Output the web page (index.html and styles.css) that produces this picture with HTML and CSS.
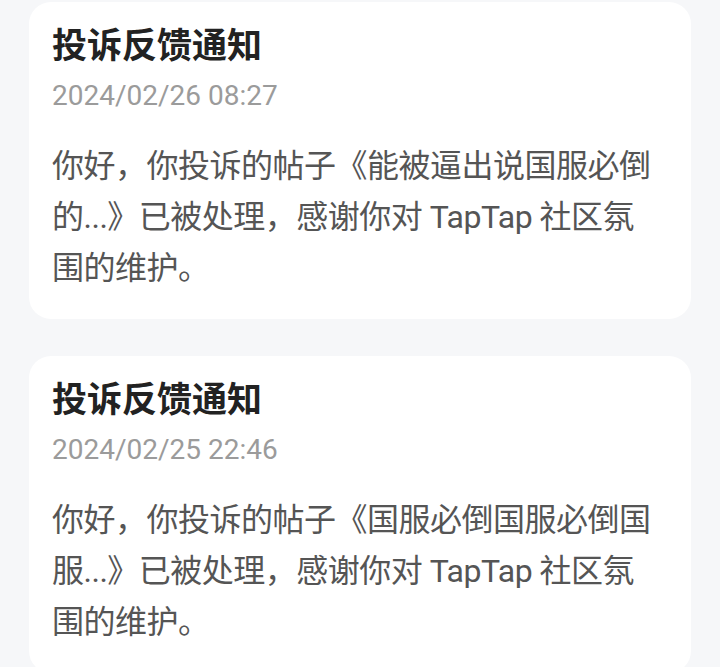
FILE: index.html
```html
<!DOCTYPE html>
<html lang="zh-CN">
<head>
    <meta charset="UTF-8">
    <meta name="viewport" content="width=device-width, initial-scale=1.0">
    <title>通知</title>
    <link rel="stylesheet" href="styles.css">
</head>
<body>
    <div class="list">
        <div class="card">
            <h2 class="title">投诉反馈通知</h2>
            <div class="time">2024/02/26 08:27</div>
            <p class="text">你好，你投诉的帖子《能被逼出说国服必倒的...》已被处理，感谢你对 TapTap 社区氛围的维护。</p>
        </div>
        <div class="card">
            <h2 class="title">投诉反馈通知</h2>
            <div class="time">2024/02/25 22:46</div>
            <p class="text">你好，你投诉的帖子《国服必倒国服必倒国服...》已被处理，感谢你对 TapTap 社区氛围的维护。</p>
        </div>
    </div>
</body>
</html>
```

FILE: styles.css
```css
body {
    font-family: Roboto, "Noto Sans CJK SC", sans-serif;
    background-color: #f6f7f9;
    margin: 0;
    padding: 0;
}
.list {
    display: flex;
    flex-direction: column;
    gap: 37px;
    padding: 2px 29px 0;
}
.card {
    background-color: #fff;
    border-radius: 22px;
    padding: 21px 31px 25px 23px;
}
.title {
    margin: 0;
    font-size: 35px;
    line-height: 48px;
    font-weight: 700;
    color: #222;
}
.time {
    margin-top: 5px;
    font-size: 28px;
    line-height: 40px;
    color: #9b9b9b;
}
.text {
    margin: 25px 0 0;
    font-size: 32px;
    line-height: 51px;
    letter-spacing: -0.5px;
    color: #555;
}
```
